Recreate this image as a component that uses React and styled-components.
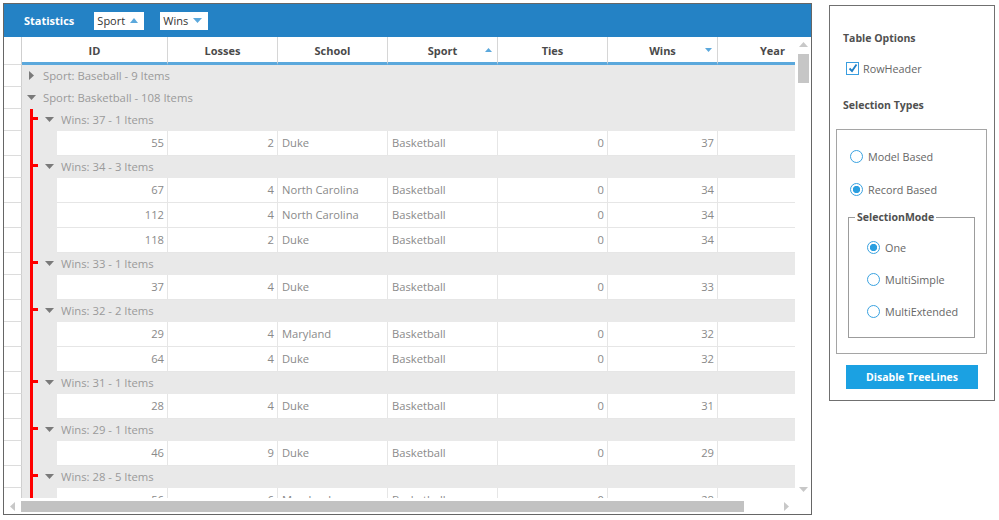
import React from 'react'
import styled, { createGlobalStyle } from 'styled-components'

const GlobalStyle = createGlobalStyle`
  body {
    margin: 0;
    background: #fff;
    font-family: "Open Sans", "Liberation Sans", sans-serif;
    font-size: 11px;
  }
`

const Page = styled.div`
  display: flex;
  align-items: flex-start;
  gap: 17px;
  padding: 3px;
`

const GridBox = styled.div`
  width: 809px;
  height: 512px;
  box-sizing: border-box;
  border: 1px solid #666;
  display: flex;
  flex-direction: column;
  flex-shrink: 0;
`

const Toolbar = styled.div`
  height: 33px;
  flex-shrink: 0;
  background: #2482c5;
  display: flex;
  align-items: center;
  padding-left: 20px;
`

const ToolbarTitle = styled.span`
  color: #fff;
  font-weight: 700;
  font-size: 11px;
  margin-right: 20px;
`

const Chip = styled.div`
  height: 18px;
  width: ${p => p.$w}px;
  box-sizing: border-box;
  background: #fff;
  display: flex;
  align-items: center;
  justify-content: space-between;
  padding: 0 6px 0 3px;
  margin-right: 16px;
  color: #333;
  font-size: 11px;
`

const Body = styled.div`
  flex: 1;
  min-height: 0;
  display: grid;
  grid-template-columns: 1fr 16px;
  grid-template-rows: 1fr 16px;
`

const Viewport = styled.div`
  overflow: hidden;
  min-width: 0;
`

const HeaderRow = styled.div`
  display: flex;
  height: 28px;
`

const RowHead = styled.div`
  width: 18px;
  flex-shrink: 0;
  box-sizing: border-box;
  background: #fff;
  border-right: 1px solid #cfcfcf;
  border-bottom: 1px solid #dcdcdc;
`

const HeadCell = styled.div`
  width: ${p => p.$w}px;
  flex-shrink: 0;
  box-sizing: border-box;
  border-right: 1px solid #d6d6d6;
  border-bottom: 3px solid #5ba8dc;
  display: grid;
  grid-template-columns: 1fr auto 1fr;
  align-items: center;
  font-weight: 700;
  font-size: 11px;
  color: #4a4a4a;
`

const HeadText = styled.span`
  grid-column: 2;
  margin-top: 1px;
`

const SortIcon = styled.svg`
  grid-column: 3;
  justify-self: end;
  margin-right: 5px;
`

const Row = styled.div`
  display: flex;
  height: ${p => p.$h}px;
`

const GroupBody = styled.div`
  flex: 1;
  background: #e9e9e9;
  display: flex;
  align-items: center;
  color: #9a9a9a;
  font-size: 11.3px;
  min-width: 790px;
`

const Gutter = styled.div`
  width: 18px;
  height: 100%;
  flex-shrink: 0;
  background: ${p => p.$line
    ? `linear-gradient(#f00, #f00) 8px 0 / 3px 100% no-repeat${p.$tick ? ', linear-gradient(#f00, #f00) 11px 8px / 5px 3px no-repeat' : ''}`
    : 'none'};
`

const ArrowBox = styled.div`
  width: 18px;
  flex-shrink: 0;
  display: flex;
  align-items: center;
  justify-content: center;
  padding-bottom: 1px;
`

const GroupLabel = styled.span`
  margin-left: 3px;
  margin-bottom: 2px;
`

const Indent = styled.div`
  display: flex;
  width: 35px;
  flex-shrink: 0;
  background: #e9e9e9;
`

const Cell = styled.div`
  width: ${p => p.$w}px;
  flex-shrink: 0;
  box-sizing: border-box;
  background: #fff;
  border-right: 1px solid #e6e6e6;
  border-bottom: 1px solid #e6e6e6;
  display: flex;
  align-items: center;
  justify-content: ${p => (p.$right ? 'flex-end' : 'flex-start')};
  padding: 0 3px 2px 4px;
  color: #8a8a8a;
  font-size: 11.2px;
  white-space: nowrap;
`

const VScroll = styled.div`
  display: flex;
  flex-direction: column;
  align-items: center;
  background: #fff;
`

const VThumb = styled.div`
  width: 11px;
  height: 29px;
  margin-top: 7px;
  background: #c6c6c6;
`

const HScroll = styled.div`
  display: flex;
  align-items: center;
  background: #fff;
  padding: 0 6px;
`

const HThumb = styled.div`
  width: 723px;
  height: 11px;
  margin-left: 6px;
  background: #c2c2c2;
`

const Panel = styled.div`
  width: 166px;
  height: 396px;
  margin-top: 2px;
  box-sizing: border-box;
  border: 1px solid #707070;
  padding: 0 6px;
  display: flex;
  flex-direction: column;
  flex-shrink: 0;
  color: #666;
`

const PanelTitle = styled.div`
  margin: ${p => p.$top}px 0 0 7px;
  line-height: 16px;
  font-weight: 700;
  font-size: 10.5px;
  color: #505050;
`

const OptionRow = styled.label`
  display: flex;
  align-items: center;
  gap: ${p => p.$gap || 5}px;
  height: 16px;
  margin: ${p => p.$top}px 0 0 ${p => p.$left || 0}px;
  font-size: 10.8px;
`

const CheckBox = styled.span`
  width: 13px;
  height: 13px;
  box-sizing: border-box;
  border: 1px solid #3a9ee0;
  display: flex;
  align-items: center;
  justify-content: center;
`

const Radio = styled.span`
  width: 13px;
  height: 13px;
  box-sizing: border-box;
  border-radius: 50%;
  border: 1px solid #3aa2e0;
  background: ${p => (p.$on ? 'radial-gradient(circle, #2a9fe0 0 3.4px, #fff 3.9px)' : '#fff')};
`

const TypesBox = styled.div`
  margin-top: 16px;
  width: 151px;
  height: 225px;
  box-sizing: border-box;
  border: 1px solid #a5a5a5;
  padding-left: 13px;
  display: flex;
  flex-direction: column;
`

const ModeSet = styled.fieldset`
  margin: 12px 0 0 -2px;
  padding: 0;
  width: 127px;
  height: 129px;
  box-sizing: border-box;
  border: 1px solid #9c9c9c;
`

const ModeLegend = styled.legend`
  margin-left: 6px;
  padding: 0 2px;
  line-height: 16px;
  font-weight: 700;
  font-size: 10.5px;
  color: #505050;
`

const ModeList = styled.div`
  display: flex;
  flex-direction: column;
  gap: 16px;
  padding: 14px 0 0 18px;
`

const ActionButton = styled.button`
  margin: 11px auto 0;
  width: 132px;
  height: 24px;
  border: none;
  background: #1ba1e2;
  color: #fff;
  font-family: inherit;
  font-weight: 700;
  font-size: 10.5px;
  padding: 0;
`

const Tri = ({ dir, color = '#7a7a7a' }) => {
  if (dir === 'right') {
    return (
      <svg width="5" height="9" viewBox="0 0 5 9">
        <polygon points="0,0 5,4.5 0,9" fill={color} />
      </svg>
    )
  }
  if (dir === 'up') {
    return (
      <svg width="8" height="5" viewBox="0 0 8 5">
        <polygon points="0,5 4,0 8,5" fill={color} />
      </svg>
    )
  }
  return (
    <svg width="9" height="5" viewBox="0 0 9 5">
      <polygon points="0,0 9,0 4.5,5" fill={color} />
    </svg>
  )
}

const columns = [
  { key: 'id', title: 'ID', w: 146 },
  { key: 'losses', title: 'Losses', w: 110 },
  { key: 'school', title: 'School', w: 110 },
  { key: 'sport', title: 'Sport', w: 110, sort: 'up' },
  { key: 'ties', title: 'Ties', w: 110 },
  { key: 'wins', title: 'Wins', w: 110, sort: 'down' },
  { key: 'year', title: 'Year', w: 110 },
]

const winGroups = [
  { wins: 37, count: 1, rows: [[55, 2, 'Duke', 0, 37]] },
  { wins: 34, count: 3, rows: [[67, 4, 'North Carolina', 0, 34], [112, 4, 'North Carolina', 0, 34], [118, 2, 'Duke', 0, 34]] },
  { wins: 33, count: 1, rows: [[37, 4, 'Duke', 0, 33]] },
  { wins: 32, count: 2, rows: [[29, 4, 'Maryland', 0, 32], [64, 4, 'Duke', 0, 32]] },
  { wins: 31, count: 1, rows: [[28, 4, 'Duke', 0, 31]] },
  { wins: 29, count: 1, rows: [[46, 9, 'Duke', 0, 29]] },
  { wins: 28, count: 5, rows: [[56, 6, 'Maryland', 0, 28], [70, 5, 'Duke', 0, 28]] },
]

const DataRow = ({ row }) => {
  const [id, losses, school, ties, wins] = row
  return (
    <Row $h={25}>
      <RowHead />
      <Indent>
        <Gutter $line />
      </Indent>
      <Cell $w={111} $right>{id}</Cell>
      <Cell $w={110} $right>{losses}</Cell>
      <Cell $w={110}>{school}</Cell>
      <Cell $w={110}>Basketball</Cell>
      <Cell $w={110} $right>{ties}</Cell>
      <Cell $w={110} $right>{wins}</Cell>
      <Cell $w={110} />
    </Row>
  )
}

const App = () => {
  return (
    <>
      <GlobalStyle />
      <Page>
        <GridBox>
          <Toolbar>
            <ToolbarTitle>Statistics</ToolbarTitle>
            <Chip $w={50}>
              Sport
              <Tri dir="up" color="#5ba8dc" />
            </Chip>
            <Chip $w={48}>
              Wins
              <Tri dir="down" color="#5ba8dc" />
            </Chip>
          </Toolbar>
          <Body>
            <Viewport>
              <HeaderRow>
                <RowHead />
                {columns.map(col => (
                  <HeadCell key={col.key} $w={col.w}>
                    <HeadText>{col.title}</HeadText>
                    {col.sort && (
                      <SortIcon width="7" height="4" viewBox="0 0 7 4">
                        <polygon
                          points={col.sort === 'up' ? '0,4 3.5,0 7,4' : '0,0 7,0 3.5,4'}
                          fill="#5ba8dc"
                        />
                      </SortIcon>
                    )}
                  </HeadCell>
                ))}
              </HeaderRow>

              <Row $h={22}>
                <RowHead />
                <GroupBody>
                  <ArrowBox><Tri dir="right" /></ArrowBox>
                  <GroupLabel>Sport: Baseball - 9 Items</GroupLabel>
                </GroupBody>
              </Row>
              <Row $h={22}>
                <RowHead />
                <GroupBody>
                  <ArrowBox><Tri dir="down" /></ArrowBox>
                  <GroupLabel>Sport: Basketball - 108 Items</GroupLabel>
                </GroupBody>
              </Row>

              {winGroups.map(g => (
                <React.Fragment key={g.wins}>
                  <Row $h={22}>
                    <RowHead />
                    <GroupBody>
                      <Gutter $line $tick />
                      <ArrowBox><Tri dir="down" /></ArrowBox>
                      <GroupLabel>{`Wins: ${g.wins} - ${g.count} Items`}</GroupLabel>
                    </GroupBody>
                  </Row>
                  {g.rows.map(r => <DataRow key={r[0]} row={r} />)}
                </React.Fragment>
              ))}
            </Viewport>

            <VScroll>
              <svg width="9" height="5" viewBox="0 0 9 5" style={{ marginTop: 5 }}>
                <polygon points="0,5 4.5,0 9,5" fill="#c8c8c8" />
              </svg>
              <VThumb />
              <div style={{ flex: 1 }} />
              <svg width="9" height="5" viewBox="0 0 9 5" style={{ marginBottom: 6 }}>
                <polygon points="0,0 9,0 4.5,5" fill="#c8c8c8" />
              </svg>
            </VScroll>

            <HScroll>
              <svg width="5" height="9" viewBox="0 0 5 9">
                <polygon points="5,0 0,4.5 5,9" fill="#c8c8c8" />
              </svg>
              <HThumb />
              <svg width="5" height="9" viewBox="0 0 5 9" style={{ marginLeft: 'auto' }}>
                <polygon points="0,0 5,4.5 0,9" fill="#c8c8c8" />
              </svg>
            </HScroll>
            <div />
          </Body>
        </GridBox>

        <Panel>
          <PanelTitle $top={24}>Table Options</PanelTitle>
          <OptionRow $top={14} $left={10} $gap={4}>
            <CheckBox>
              <svg width="10" height="10" viewBox="0 0 10 10">
                <polyline points="1.5,5.5 4,8 8.5,1.5" fill="none" stroke="#1e7fc6" strokeWidth="1.8" />
              </svg>
            </CheckBox>
            RowHeader
          </OptionRow>
          <PanelTitle $top={21}>Selection Types</PanelTitle>
          <TypesBox>
            <OptionRow $top={18}>
              <Radio />
              Model Based
            </OptionRow>
            <OptionRow $top={17}>
              <Radio $on />
              Record Based
            </OptionRow>
            <ModeSet>
              <ModeLegend>SelectionMode</ModeLegend>
              <ModeList>
                <OptionRow $top={0}><Radio $on />One</OptionRow>
                <OptionRow $top={0}><Radio />MultiSimple</OptionRow>
                <OptionRow $top={0}><Radio />MultiExtended</OptionRow>
              </ModeList>
            </ModeSet>
          </TypesBox>
          <ActionButton>Disable TreeLines</ActionButton>
        </Panel>
      </Page>
    </>
  )
}

export default App
